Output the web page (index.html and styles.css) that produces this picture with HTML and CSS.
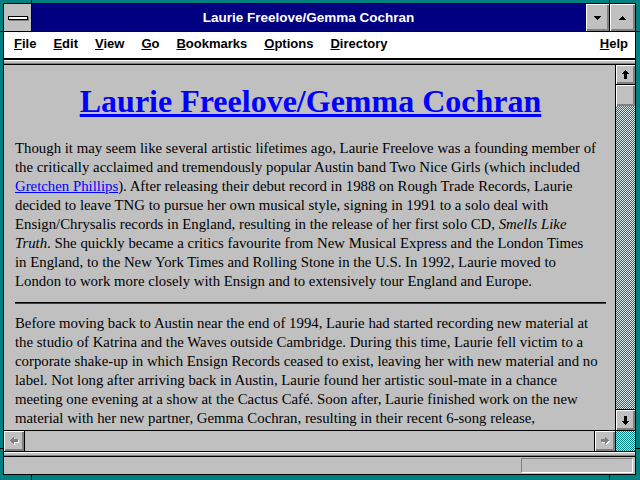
FILE: index.html
```html
<!DOCTYPE html>
<html>
<head>
    <title>Laurie Freelove/Gemma Cochran</title>
    <link rel="stylesheet" href="styles.css">
</head>
<body>
<div class="window">
    <div class="titlebar">
        <div class="sysmenu"><span class="sysbar"></span></div>
        <div class="caption">Laurie Freelove/Gemma Cochran</div>
        <div class="tbtn min"><svg width="7" height="4" viewBox="0 0 7 4"><path d="M0 0H7L3.5 4Z"/></svg></div>
        <div class="tbtn max"><svg width="7" height="4" viewBox="0 0 7 4"><path d="M0 4H7L3.5 0Z"/></svg></div>
    </div>

    <div class="menubar">
        <span><u>F</u>ile</span>
        <span><u>E</u>dit</span>
        <span><u>V</u>iew</span>
        <span><u>G</u>o</span>
        <span><u>B</u>ookmarks</span>
        <span><u>O</u>ptions</span>
        <span><u>D</u>irectory</span>
        <span class="help"><u>H</u>elp</span>
    </div>
    <div class="ruler"></div>

    <div class="vrow">
        <div class="page">
            <h1><a href="#">Laurie Freelove/Gemma Cochran</a></h1>
            <p>Though it may seem like several artistic lifetimes ago, Laurie Freelove was a founding member of<br>
            the critically acclaimed and tremendously popular Austin band Two Nice Girls (which included<br>
            <a href="#">Gretchen Phillips</a>). After releasing their debut record in 1988 on Rough Trade Records, Laurie<br>
            decided to leave TNG to pursue her own musical style, signing in 1991 to a solo deal with<br>
            Ensign/Chrysalis records in England, resulting in the release of her first solo CD, <i>Smells Like<br>
            Truth</i>. She quickly became a critics favourite from New Musical Express and the London Times<br>
            in England, to the New York Times and Rolling Stone in the U.S. In 1992, Laurie moved to<br>
            London to work more closely with Ensign and to extensively tour England and Europe.</p>
            <hr>
            <p>Before moving back to Austin near the end of 1994, Laurie had started recording new material at<br>
            the studio of Katrina and the Waves outside Cambridge. During this time, Laurie fell victim to a<br>
            corporate shake-up in which Ensign Records ceased to exist, leaving her with new material and no<br>
            label. Not long after arriving back in Austin, Laurie found her artistic soul-mate in a chance<br>
            meeting one evening at a show at the Cactus Caf&eacute;. Soon after, Laurie finished work on the new<br>
            material with her new partner, Gemma Cochran, resulting in their recent 6-song release,<br>
            <i>Lovers</i>, on their own label.</p>
        </div>
        <div class="vscroll">
            <div class="sbtn up"><svg width="7" height="9" viewBox="0 0 7 9"><path d="M3.5 0L7 4H5V9H2V4H0Z"/></svg></div>
            <div class="thumb"></div>
            <div class="track"></div>
            <div class="sbtn down"><svg width="7" height="9" viewBox="0 0 7 9"><path d="M3.5 9L7 5H5V0H2V5H0Z"/></svg></div>
        </div>
    </div>

    <div class="hscroll">
        <div class="sbtn left"><svg width="9" height="8" viewBox="0 0 9 8"><path class="hi" d="M1 4.5L5 1V3H9V6H5V8Z"/><path d="M0 3.5L4 0V2H8V5H4V7Z"/></svg></div>
        <div class="htrack"></div>
        <div class="sbtn right"><svg width="9" height="8" viewBox="0 0 9 8"><path class="hi" d="M9 4.5L5 1V3H1V6H5V8Z"/><path d="M8 3.5L4 0V2H0V5H4V7Z"/></svg></div>
        <div class="corner"></div>
    </div>
    <div class="ruler"></div>

    <div class="status">
        <div class="statusbox"></div>
    </div>
</div>
</body>
</html>
```

FILE: styles.css
```css
html,
body {
    margin: 0;
    width: 640px;
    height: 480px;
    overflow: hidden;
}

body {
    font-family: "Liberation Sans", Arial, sans-serif;
    /* frame resize marks on the teal border */
    background:
        linear-gradient(#000, #000) 31px 0 / 1px 3px no-repeat,
        linear-gradient(#000, #000) 609px 0 / 1px 3px no-repeat,
        linear-gradient(#000, #000) 31px 475px / 1px 5px no-repeat,
        linear-gradient(#000, #000) 609px 475px / 1px 5px no-repeat,
        linear-gradient(#000, #000) 0 31px / 3px 1px no-repeat,
        linear-gradient(#000, #000) 0 448px / 3px 1px no-repeat,
        linear-gradient(#000, #000) 636px 31px / 4px 1px no-repeat,
        linear-gradient(#000, #000) 636px 448px / 4px 1px no-repeat,
        #008080;
}

.window {
    margin: 3px 0 0 3px;
    width: 631px;
    height: 470px;
    border: 1px solid #000;
    background: #c0c0c0;
    display: flex;
    flex-direction: column;
}

/* title bar */
.titlebar {
    display: flex;
    height: 27px;
    border-bottom: 1px solid #000;
}

.sysmenu {
    width: 27px;
    border-right: 1px solid #000;
    background: #c0c0c0;
    display: flex;
    align-items: center;
    justify-content: center;
}

.sysbar {
    width: 18px;
    height: 2px;
    background: #fff;
    border: 1px solid #000;
    box-shadow: 1px 1px #808080;
}

.caption {
    flex: 1;
    background: #000080;
    color: #fff;
    font-weight: bold;
    font-size: 13.5px;
    line-height: 27px;
    text-align: center;
}

.tbtn {
    border-left: 1px solid #000;
    display: flex;
    align-items: center;
    justify-content: center;
    background: #c0c0c0;
    box-shadow: inset 1px 1px #fff, inset -1px -1px #808080, inset -2px -2px #808080;
}
.tbtn.min { width: 23px; }
.tbtn.max { width: 25px; }

svg { display: block; shape-rendering: crispEdges; }

/* menu */
.menubar {
    height: 26px;
    background: #fff;
    border-bottom: 2px solid #000;
    display: flex;
    gap: 17px;
    padding: 0 7px 0 10px;
    font-weight: bold;
    font-size: 13px;
    line-height: 24px;
    color: #000;
}
.menubar .help { margin-left: auto; }
.menubar u { text-underline-offset: 1px; }

.ruler {
    height: 4px;
    background: #c0c0c0;
    box-shadow: inset 0 1px #fff, inset 0 -1px #808080;
    border-bottom: 1px solid #000;
}

/* document area */
.vrow {
    display: flex;
    height: 365px;
}

.page {
    flex: 1;
    overflow: hidden;
    padding: 0 9px 0 11px;
    font-family: "Liberation Serif", "Times New Roman", serif;
    font-size: 14.8px;
    line-height: 19px;
    white-space: nowrap;
    color: #000;
}

.page a { color: #0000ff; }

.page h1 {
    margin: 18px 0 19px;
    font-size: 32px;
    line-height: normal;
    text-align: center;
}
.page h1 a {
    text-decoration-thickness: 3px;
    text-underline-offset: 2px;
}

.page p { margin: 0; }

.page hr {
    margin: 11px 0 10px;
    height: 0;
    border: 0;
    border-top: 1px solid #000;
    border-bottom: 1px solid #404040;
}

/* scroll bars */
.sbtn {
    display: flex;
    align-items: center;
    justify-content: center;
    background: #c0c0c0;
    box-shadow: inset 1px 1px #fff, inset -1px -1px #808080, inset -2px -2px #808080;
}

.vscroll {
    width: 19px;
    border-left: 1px solid #000;
    display: flex;
    flex-direction: column;
}
.vscroll .up { height: 19px; border-bottom: 1px solid #000; }
.vscroll .down { height: 20px; border-top: 1px solid #000; }

.thumb {
    height: 21px;
    background: #c0c0c0;
    box-shadow: inset 1px 1px #fff, inset -1px -1px #808080, inset -2px -2px #808080;
}

.track,
.corner {
    background: repeating-conic-gradient(#008080 0 25%, #d8e8e8 0 50%) 0 0 / 2px 2px;
}
.track { flex: 1; }

.hscroll {
    display: flex;
    height: 20px;
    border-top: 1px solid #000;
    border-bottom: 1px solid #000;
}
.hscroll .left { width: 20px; border-right: 1px solid #000; }
.hscroll .right { width: 20px; border-left: 1px solid #000; }
.hscroll svg path { fill: #808080; }
.hscroll svg path.hi { fill: #fff; }
.htrack { flex: 1; }
.corner { width: 19px; border-left: 1px solid #000; }

/* status line */
.status {
    height: 17px;
    display: flex;
    justify-content: flex-end;
    padding: 1px 2px 1px 0;
    box-sizing: border-box;
}
.statusbox {
    width: 112px;
    box-sizing: border-box;
    border: 1px solid #fff;
    border-top-color: #808080;
    border-left-color: #808080;
}
```
